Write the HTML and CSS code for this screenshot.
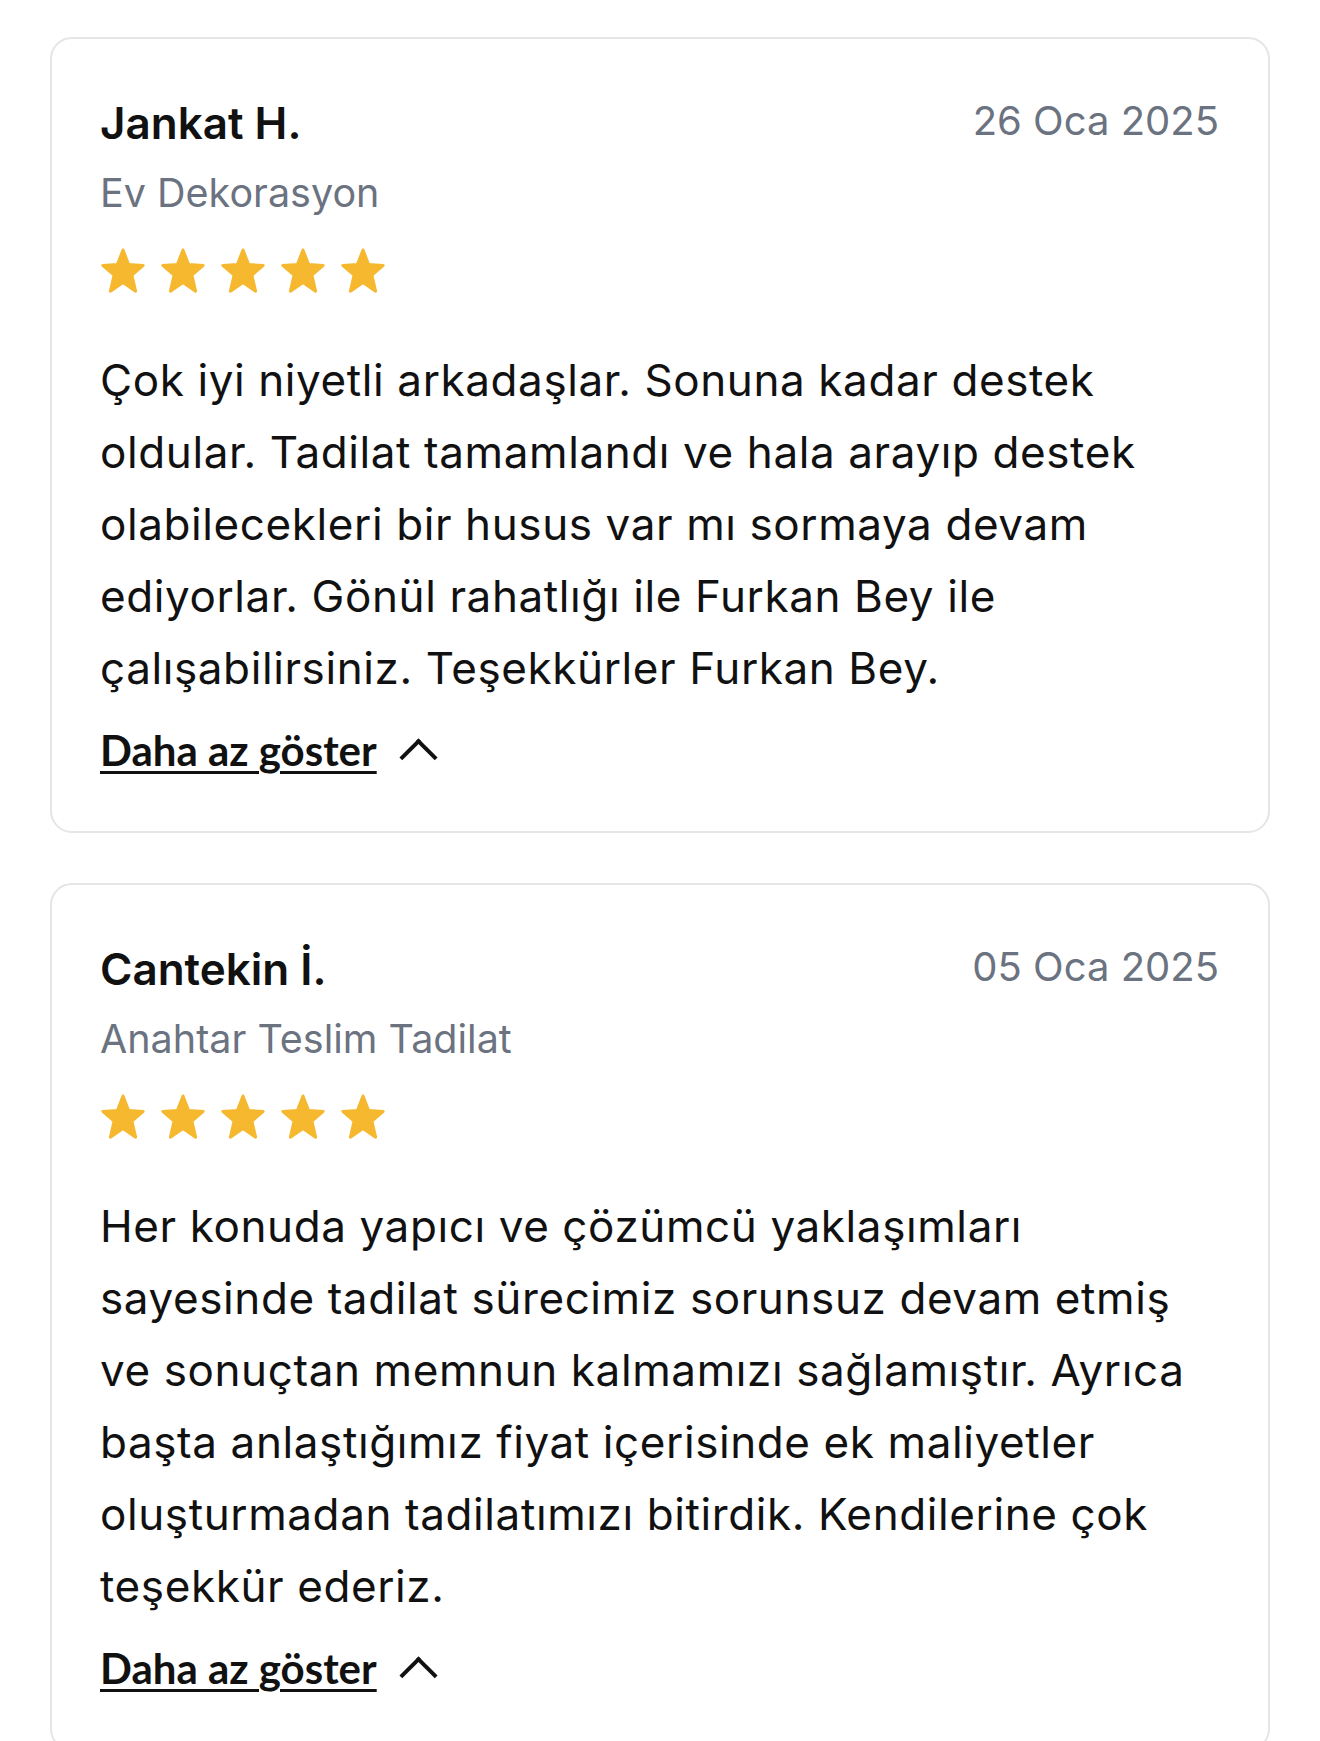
FILE: index.html
```html
<!DOCTYPE html>
<html lang="tr">
<head>
  <meta charset="UTF-8" />
  <meta name="viewport" content="width=device-width, initial-scale=1.0"/>
  <title>Yorumlar</title>
  <link rel="stylesheet" href="styles.css">
</head>
<body>
  <div class="reviews">

    <div class="review">
      <div class="review-head">
        <div class="who">
          <h3 class="name">Jankat H.</h3>
          <p class="service">Ev Dekorasyon</p>
        </div>
        <span class="date">26 Oca 2025</span>
      </div>
      <div class="stars">
        <svg viewBox="0 0 46 48"><use href="#star"/></svg>
        <svg viewBox="0 0 46 48"><use href="#star"/></svg>
        <svg viewBox="0 0 46 48"><use href="#star"/></svg>
        <svg viewBox="0 0 46 48"><use href="#star"/></svg>
        <svg viewBox="0 0 46 48"><use href="#star"/></svg>
      </div>
      <p class="text">Çok iyi niyetli arkadaşlar. Sonuna kadar destek oldular. Tadilat tamamlandı ve hala arayıp destek olabilecekleri bir husus var mı sormaya devam ediyorlar. Gönül rahatlığı ile Furkan Bey ile çalışabilirsiniz. Teşekkürler Furkan Bey.</p>
      <a class="toggle" href="#">Daha az göster</a>
    </div>

    <div class="review">
      <div class="review-head">
        <div class="who">
          <h3 class="name">Cantekin İ.</h3>
          <p class="service">Anahtar Teslim Tadilat</p>
        </div>
        <span class="date">05 Oca 2025</span>
      </div>
      <div class="stars">
        <svg viewBox="0 0 46 48"><use href="#star"/></svg>
        <svg viewBox="0 0 46 48"><use href="#star"/></svg>
        <svg viewBox="0 0 46 48"><use href="#star"/></svg>
        <svg viewBox="0 0 46 48"><use href="#star"/></svg>
        <svg viewBox="0 0 46 48"><use href="#star"/></svg>
      </div>
      <p class="text">Her konuda yapıcı ve çözümcü yaklaşımları sayesinde tadilat sürecimiz sorunsuz devam etmiş ve sonuçtan memnun kalmamızı sağlamıştır. Ayrıca başta anlaştığımız fiyat içerisinde ek maliyetler oluşturmadan tadilatımızı bitirdik. Kendilerine çok teşekkür ederiz.</p>
      <a class="toggle" href="#">Daha az göster</a>
    </div>

  </div>

  <svg class="defs" width="0" height="0">
    <defs>
      <path id="star" d="M23 3 L28.6 17.6 L43.2 18.4 L31.9 28.2 L35.6 44.2 L23 35.6 L10.4 44.2 L14.1 28.2 L2.8 18.4 L17.4 17.6 Z"/>
    </defs>
  </svg>
</body>
</html>
```

FILE: styles.css
```css
body {
  margin: 0;
  background: #fff;
  font-family: Inter, "Open Sans", sans-serif;
  color: #111;
}
.reviews {
  padding: 37px 50px 0;
  display: flex;
  flex-direction: column;
  gap: 50px;
}
.review {
  border: 2px solid #e5e5e5;
  border-radius: 22px;
  padding: 56px 48px 55px;
}
.review-head {
  display: flex;
  justify-content: space-between;
  align-items: flex-start;
}
.name {
  margin: 0;
  font-size: 44px;
  line-height: 56px;
  font-weight: 600;
}
.service {
  margin: 16px 0 0;
  font-size: 39.5px;
  line-height: 52px;
  color: #6b7280;
}
.date {
  font-size: 40px;
  line-height: 52px;
  color: #6b7280;
  margin-right: 1px;
}
.stars {
  display: flex;
  gap: 14px;
  margin-top: 28px;
}
.stars svg {
  width: 46px;
  height: 48px;
  fill: #f5b82e;
  stroke: #f5b82e;
  stroke-width: 3;
  stroke-linejoin: round;
}
.text {
  margin: 49px 0 0;
  font-size: 44px;
  line-height: 72px;
  letter-spacing: 0.6px;
  max-width: 1105px;
}
.toggle {
  display: inline-flex;
  align-items: center;
  gap: 28px;
  margin-top: 20px;
  font-family: Lato, sans-serif;
  font-size: 42px;
  line-height: 52px;
  font-weight: 700;
  color: #111;
  text-decoration: underline;
  text-decoration-thickness: 2.5px;
  text-underline-offset: 5px;
}
.toggle::after {
  content: "";
  width: 23px;
  height: 23px;
  border-left: 4px solid #111;
  border-top: 4px solid #111;
  transform: rotate(45deg);
  margin-top: 14px;
}
.defs {
  position: absolute;
}
```
